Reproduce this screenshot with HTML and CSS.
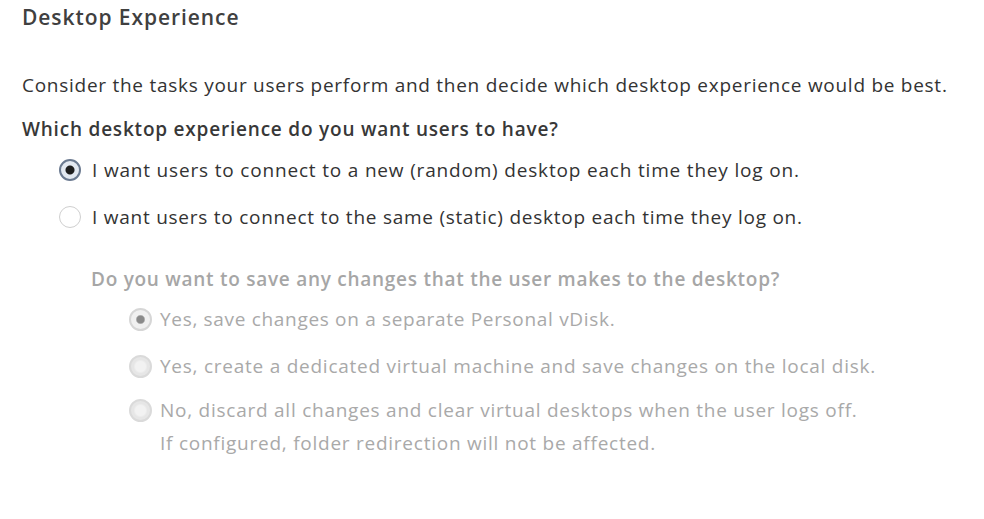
FILE: index.html
```html
<!DOCTYPE html>
<html>
<head>
<meta charset="utf-8">
<link rel="stylesheet" href="styles.css">
</head>
<body>
<div class="page">
  <h1 class="title">Desktop Experience</h1>
  <p class="desc">Consider the tasks your users perform and then decide which desktop experience would be best.</p>
  <p class="question">Which desktop experience do you want users to have?</p>
  <div class="options">
    <div class="option">
      <span class="radio checked"></span>
      <span class="label">I want users to connect to a new (random) desktop each time they log on.</span>
    </div>
    <div class="option">
      <span class="radio"></span>
      <span class="label">I want users to connect to the same (static) desktop each time they log on.</span>
    </div>
  </div>
  <div class="sub">
    <p class="subq">Do you want to save any changes that the user makes to the desktop?</p>
    <div class="suboptions">
      <div class="option sub-option">
        <span class="radio dis checked"></span>
        <span class="label">Yes, save changes on a separate Personal vDisk.</span>
      </div>
      <div class="option sub-option">
        <span class="radio dis"></span>
        <span class="label">Yes, create a dedicated virtual machine and save changes on the local disk.</span>
      </div>
      <div class="option sub-option">
        <span class="radio dis"></span>
        <span class="label">No, discard all changes and clear virtual desktops when the user logs off.<br>If configured, folder redirection will not be affected.</span>
      </div>
    </div>
  </div>
</div>
</body>
</html>
```
FILE: styles.css
```css
html, body {
  margin: 0;
  padding: 0;
  background: #fff;
}
body {
  font-family: "Open Sans", "Noto Sans", sans-serif;
  color: #333;
  font-size: 19px;
  letter-spacing: 0.75px;
}
.page {
  width: 984px;
  height: 519px;
  padding: 4px 0 0 22px;
  box-sizing: border-box;
}
.title {
  margin: 0;
  font-size: 21px;
  font-weight: 600;
  line-height: 26px;
  letter-spacing: 0.93px;
  color: #404040;
}
.desc {
  margin: 43px 0 0;
  line-height: 24px;
  letter-spacing: 0.73px;
}
.question {
  margin: 20px 0 0;
  line-height: 24px;
  font-weight: 600;
  letter-spacing: 0.79px;
  color: #383838;
}
.options {
  margin: 17px 0 0 37px;
  display: flex;
  flex-direction: column;
  gap: 23px;
}
.option {
  display: flex;
  align-items: flex-start;
  gap: 11px;
  line-height: 24px;
}
.options .option:first-child .label {
  letter-spacing: 0.82px;
}
.radio {
  flex: none;
  width: 22px;
  height: 22px;
  margin-top: 1px;
  border-radius: 50%;
  box-sizing: border-box;
  border: 1px solid #cfcfcf;
  background: #fff;
}
.radio.checked {
  border: 2px solid #6b7a90;
  background: radial-gradient(circle, #1e1e1e 0 4px, #e3e9f1 5px 100%);
}
.sub {
  margin: 38px 0 0 69px;
  color: #a9a9a9;
}
.subq {
  margin: 0;
  line-height: 24px;
  font-weight: 600;
  letter-spacing: 0.73px;
  color: #a6a6a6;
}
.suboptions {
  margin: 12px 0 0 38px;
  display: flex;
  flex-direction: column;
  gap: 14px;
}
.suboptions .option:last-child {
  margin-top: -3px;
}
.sub-option {
  gap: 8px;
}
.sub-option .label {
  line-height: 33px;
}
.suboptions .option:first-child .label {
  letter-spacing: 0.68px;
}
.sub-option .radio {
  width: 23px;
  height: 23px;
  margin-top: 5px;
}
.radio.dis {
  border: 2px solid #dadada;
  background: radial-gradient(circle, #f2f2f2 0 5px, #e6e6e6 7px 100%);
}
.radio.dis.checked {
  border: 2px solid #d6d6d6;
  background: radial-gradient(circle, #8a8a8a 0 3.5px, #f0f0f0 5px 100%);
}
```
